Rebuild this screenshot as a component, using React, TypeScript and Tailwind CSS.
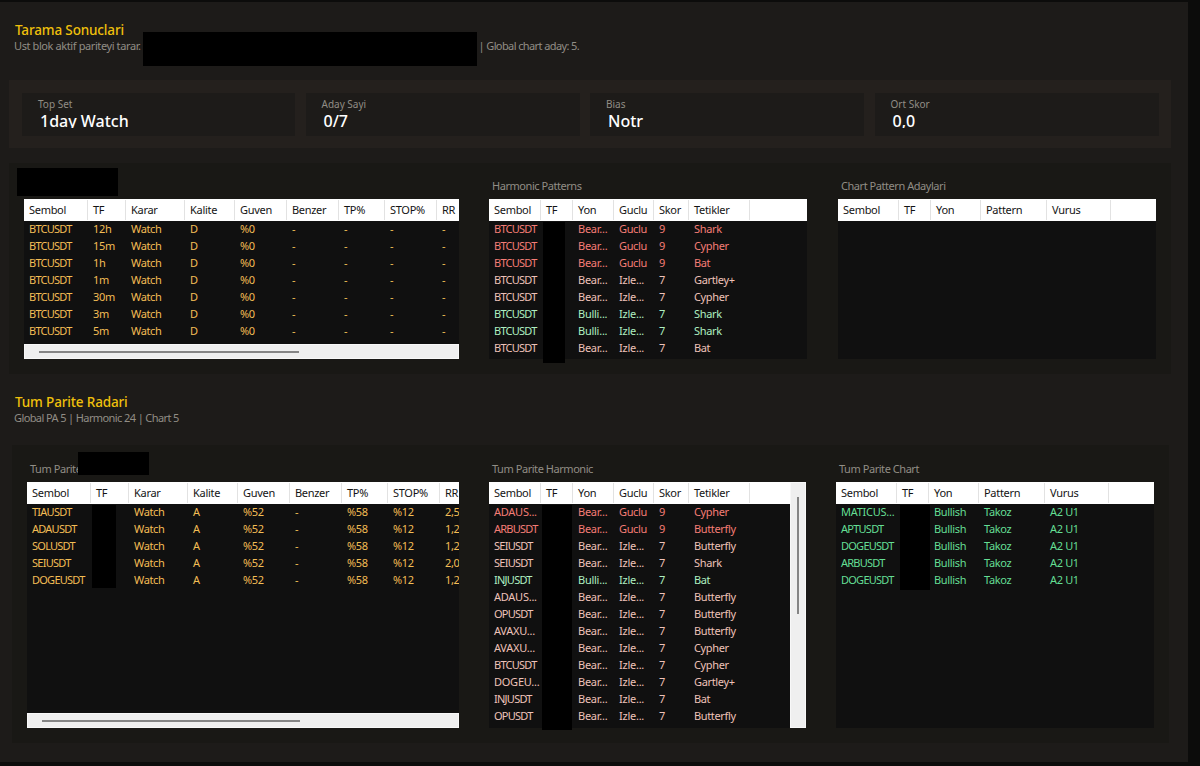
import type { ReactNode } from "react";
import clsx from "clsx";

type Row = { tone: string; cells: string[] };

const amber = "text-[#f3bd55]";
const red = "text-[#f57d76]";
const rose = "text-[#eec2b9]";
const mint = "text-[#aeefc0]";
const green = "text-[#64de94]";

const stats = [
  { label: "Top Set", value: "1day Watch" },
  { label: "Aday Sayi", value: "0/7" },
  { label: "Bias", value: "Notr" },
  { label: "Ort Skor", value: "0,0" },
];

const scanHead = ["Sembol", "TF", "Karar", "Kalite", "Guven", "Benzer", "TP%", "STOP%", "RR"];
const harmonicHead = ["Sembol", "TF", "Yon", "Guclu", "Skor", "Tetikler", ""];
const chartHead = ["Sembol", "TF", "Yon", "Pattern", "Vurus", ""];

const scanRows: Row[] = ["12h", "15m", "1h", "1m", "30m", "3m", "5m"].map((tf) => ({
  tone: amber,
  cells: ["BTCUSDT", tf, "Watch", "D", "%0", "-", "-", "-", "-"],
}));

const strong = (symbol: string, pattern: string): Row => ({
  tone: red,
  cells: [symbol, "", "Bear...", "Guclu", "9", pattern, ""],
});
const bear = (symbol: string, pattern: string): Row => ({
  tone: rose,
  cells: [symbol, "", "Bear...", "Izle...", "7", pattern, ""],
});
const bull = (symbol: string, pattern: string): Row => ({
  tone: mint,
  cells: [symbol, "", "Bulli...", "Izle...", "7", pattern, ""],
});

const harmonicRows: Row[] = [
  strong("BTCUSDT", "Shark"),
  strong("BTCUSDT", "Cypher"),
  strong("BTCUSDT", "Bat"),
  bear("BTCUSDT", "Gartley+"),
  bear("BTCUSDT", "Cypher"),
  bull("BTCUSDT", "Shark"),
  bull("BTCUSDT", "Shark"),
  bear("BTCUSDT", "Bat"),
];

const radarRows: Row[] = [
  ["TIAUSDT", "2,5"],
  ["ADAUSDT", "1,2"],
  ["SOLUSDT", "1,2"],
  ["SEIUSDT", "2,0"],
  ["DOGEUSDT", "1,2"],
].map(([symbol, rr]) => ({
  tone: amber,
  cells: [symbol, "", "Watch", "A", "%52", "-", "%58", "%12", rr],
}));

const radarHarmonicRows: Row[] = [
  strong("ADAUS...", "Cypher"),
  strong("ARBUSDT", "Butterfly"),
  bear("SEIUSDT", "Butterfly"),
  bear("SEIUSDT", "Shark"),
  bull("INJUSDT", "Bat"),
  bear("ADAUS...", "Butterfly"),
  bear("OPUSDT", "Butterfly"),
  bear("AVAXU...", "Butterfly"),
  bear("AVAXU...", "Cypher"),
  bear("BTCUSDT", "Cypher"),
  bear("DOGEU...", "Gartley+"),
  bear("INJUSDT", "Bat"),
  bear("OPUSDT", "Butterfly"),
];

const radarChartRows: Row[] = ["MATICUS...", "APTUSDT", "DOGEUSDT", "ARBUSDT", "DOGEUSDT"].map((symbol) => ({
  tone: green,
  cells: [symbol, "", "Bullish", "Takoz", "A2 U1", ""],
}));

function Table({ cols, head, rows }: { cols: string; head: string[]; rows: Row[] }) {
  return (
    <div className="min-w-0 flex-1 overflow-hidden text-[11px] whitespace-nowrap">
      <div className={clsx("grid h-[22px] bg-white text-[#141414]", cols)}>
        {head.map((title, i) => (
          <div
            key={i}
            className={clsx(
              "my-px overflow-hidden pl-[5px] leading-[20px] tracking-[-0.3px]",
              i < head.length - 1 && "border-r border-[#e2e2e2]",
            )}
          >
            {title}
          </div>
        ))}
      </div>
      <div className="-mt-px">
        {rows.map((row, i) => (
          <div key={i} className={clsx("grid h-[17px] leading-[17px]", cols, row.tone)}>
            {row.cells.map((cell, j) => (
              <div
                key={j}
                className={clsx(
                  "pl-[5px]",
                  cell.endsWith("...")
                    ? "tracking-[-0.25px]"
                    : j === 0
                      ? "tracking-[-0.75px]"
                      : "tracking-[-0.35px]",
                )}
              >
                {cell}
              </div>
            ))}
          </div>
        ))}
      </div>
    </div>
  );
}

function HScroll({ thumb }: { thumb: string }) {
  return (
    <div className="flex h-[15px] shrink-0 items-center border border-[#f8f8f8] bg-[#efefef] pl-[14px]">
      <div className={clsx("h-[2px] bg-[#858585]", thumb)} />
    </div>
  );
}

function Heading({ title, children }: { title: string; children: ReactNode }) {
  return (
    <div className="pl-[15px]">
      <h2 className="h-[17px] text-[13.5px] leading-[18px] font-medium tracking-[-0.15px] text-[#f0c00c]">
        {title}
      </h2>
      <div className="-ml-px flex h-[15px] text-[11px] leading-[16px] tracking-[-0.6px] whitespace-nowrap text-[#918d85]">
        {children}
      </div>
    </div>
  );
}

function Caption({ children }: { children?: ReactNode }) {
  return (
    <div className="h-5 pl-[3px] text-[11px] leading-[14px] tracking-[-0.45px] whitespace-nowrap text-[#918d85]">
      {children}
    </div>
  );
}

export default function App() {
  return (
    <div className="h-[766px] w-[1200px] overflow-hidden bg-[#0c0c0b] pt-[2px] font-['Noto_Sans','Open_Sans',sans-serif]">
      <main className="h-[760px] w-[1188px] bg-[#1d1b19] pt-[19px]">
        <div className="relative h-[59px]">
          <Heading title="Tarama Sonuclari">
            <span className="w-[464.5px] tracking-[-0.4px]">Ust blok aktif pariteyi tarar.</span>
            <span>| Global chart aday: 5.</span>
          </Heading>
          <div className="absolute top-[11px] left-[143px] h-[34px] w-[334px] bg-black" />
        </div>

        {/* Summary cards */}
        <div className="ml-[9px] grid h-[68px] w-[1162px] grid-cols-[273px_274px_274px_284px] gap-x-[10.5px] bg-[#24201d] px-[13px] pt-[13px]">
          {stats.map((s) => (
            <div key={s.label} className="h-[43px] bg-[#1d1b19] pt-[3px] pl-[16px]">
              <div className="h-[18px] text-[10px] leading-[16px] text-[#918d85]">{s.label}</div>
              <div className="h-[14px] overflow-hidden pl-[2px] text-[16px] leading-[14px] font-medium text-white">
                {s.value}
              </div>
            </div>
          ))}
        </div>

        {/* Active pair results */}
        <section className="mt-[15px] ml-[9px] flex h-[211px] w-[1162px] bg-[#191815] pt-4 pl-[15px]">
          <div className="relative flex h-[180px] w-[435px] flex-col">
            <Caption />
            <div className="flex min-h-0 flex-1 flex-col bg-[#101010]">
              <Table
                cols="grid-cols-[64px_38px_59px_50px_52px_52px_46px_52px_40px]"
                head={scanHead}
                rows={scanRows}
              />
              <HScroll thumb="w-[260px]" />
            </div>
            <div className="absolute top-[-11px] left-[-7px] h-[28px] w-[101px] bg-black" />
          </div>
          <div className="relative ml-[30px] flex h-[180px] w-[318px] flex-col">
            <Caption>Harmonic Patterns</Caption>
            <div className="flex min-h-0 flex-1 bg-[#101010]">
              <Table
                cols="grid-cols-[52px_32px_41px_40px_35px_61px_1fr]"
                head={harmonicHead}
                rows={harmonicRows}
              />
            </div>
            <div className="absolute top-[43px] left-[54px] h-[141px] w-[22px] bg-black" />
          </div>
          <div className="ml-[31px] flex h-[180px] w-[318px] flex-col">
            <Caption>Chart Pattern Adaylari</Caption>
            <div className="flex min-h-0 flex-1 bg-[#101010]">
              <Table cols="grid-cols-[61px_32px_50px_66px_64px_1fr]" head={chartHead} rows={[]} />
            </div>
          </div>
        </section>

        <div className="h-[71px] pt-[19px]">
          <Heading title="Tum Parite Radari">Global PA 5 | Harmonic 24 | Chart 5</Heading>
        </div>

        {/* All pairs radar */}
        <section className="ml-3 flex h-[298px] w-[1157px] bg-[#191815] pt-[17px] pl-[15px]">
          <div className="relative flex h-[266px] w-[432px] flex-col">
            <Caption>Tum Parite</Caption>
            <div className="flex min-h-0 flex-1 flex-col bg-[#101010]">
              <Table
                cols="grid-cols-[64px_38px_59px_50px_52px_52px_46px_52px_40px]"
                head={scanHead}
                rows={radarRows}
              />
              <HScroll thumb="w-[258px]" />
            </div>
            <div className="absolute top-[-10px] left-[51px] h-[23px] w-[71px] bg-black" />
            <div className="absolute top-[43px] left-[65px] h-[83px] w-[24px] bg-black" />
          </div>
          <div className="relative ml-[30px] flex h-[266px] w-[317px] flex-col">
            <Caption>Tum Parite Harmonic</Caption>
            <div className="flex min-h-0 flex-1 bg-[#101010]">
              <Table
                cols="grid-cols-[52px_32px_41px_40px_35px_61px_1fr]"
                head={harmonicHead}
                rows={radarHarmonicRows}
              />
              <div className="flex w-4 shrink-0 justify-center border border-[#f8f8f8] bg-[#efefef] pt-[14px]">
                <div className="h-[117px] w-[2px] bg-[#858585]" />
              </div>
            </div>
            <div className="absolute top-[43px] left-[53px] h-[225px] w-[30px] bg-black" />
          </div>
          <div className="relative ml-[30px] flex h-[266px] w-[318px] flex-col">
            <Caption>Tum Parite Chart</Caption>
            <div className="flex min-h-0 flex-1 bg-[#101010]">
              <Table cols="grid-cols-[61px_32px_50px_66px_64px_1fr]" head={chartHead} rows={radarChartRows} />
            </div>
            <div className="absolute top-[43px] left-[64px] h-[85px] w-[30px] bg-black" />
          </div>
        </section>
      </main>
    </div>
  );
}
